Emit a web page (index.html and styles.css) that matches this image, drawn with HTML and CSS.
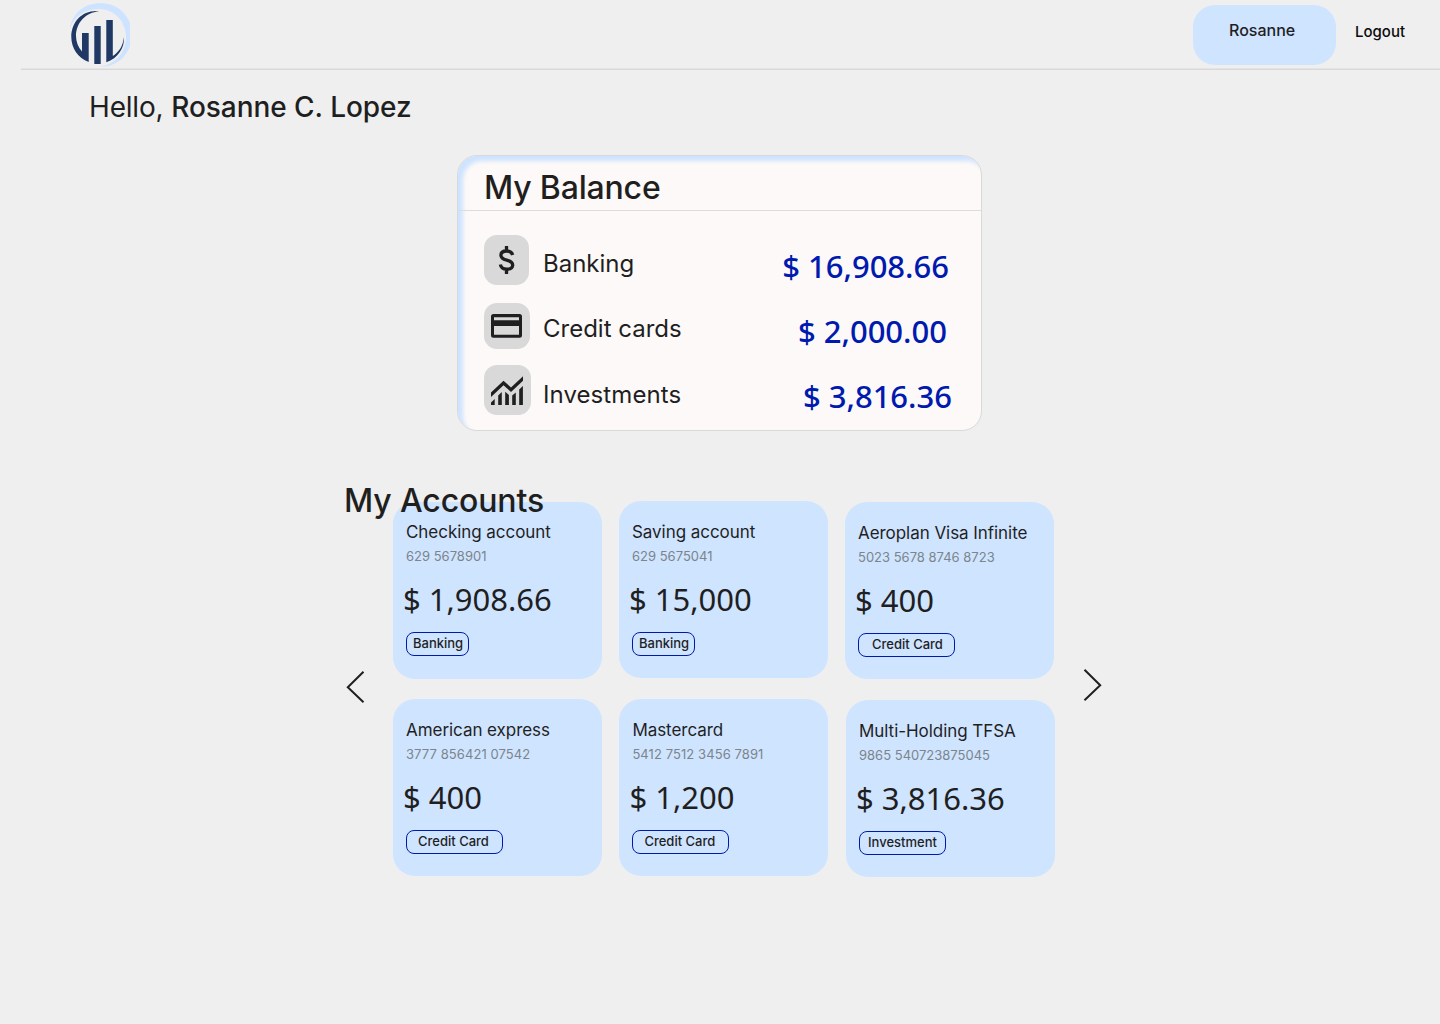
FILE: index.html
```html
<!DOCTYPE html>
<html lang="en">
<head>
<meta charset="utf-8">
<title>My accounts</title>
<link rel="stylesheet" href="styles.css">
</head>
<body>
<header class="topbar">
  <svg class="logo" viewBox="70 0 60 68" width="60" height="68" aria-label="Logo">
    <path fill="#cde3ff" d="M70 28C73 12 85 3.300 100 3.300C113 3.300 124 9 130 23V46C126 58 115 67 99 67C114 65 126 54 126 37C126 21 114 9 99 9C86 9 75 15 70 28Z"/>
    <path fill="#1f3864" d="M99 11.200C83 9.500 71.300 21.500 71.300 37C71.300 48 78 58 88.700 62V33H82V51.500C78 47 76 41.500 76 36C76 22.500 86 12.500 99 11.200ZM94.300 26H100.700V64H94.300ZM106.300 20H112.800V56C119 52 123 46 123.900 37C125 47 118 58.500 106.300 62.300Z"/>
  </svg>
  <nav class="user-nav">
    <a class="user-pill">Rosanne</a>
    <a class="logout">Logout</a>
  </nav>
</header>

<main>
  <h1 class="greeting">Hello, <strong>Rosanne C. Lopez</strong></h1>

  <section class="balance">
    <h2 class="balance-title">My Balance</h2>
    <div class="balance-rows">
      <div class="balance-row">
        <span class="icon icon-bank">
          <svg viewBox="0 0 45 50" width="45" height="50"><path fill="none" stroke="#1f1f1f" stroke-width="3.3" d="M22.500 11V16M22.500 34V39M28.700 20C27.900 17.200 25.600 16 22.700 16C19 16 16.900 17.700 16.900 20.300C16.900 23.200 19 24.200 22.800 25.200C26.800 26.200 28.700 27.300 28.700 30C28.700 32.800 26.300 34.200 22.700 34.200C19.200 34.200 16.900 32.600 16.400 29.500"/></svg>
        </span>
        <span class="label">Banking</span>
        <span class="amount amount-bank">$ 16,908.66</span>
      </div>
      <div class="balance-row">
        <span class="icon icon-card">
          <svg viewBox="0 0 46 46" width="46" height="46"><path fill="#1f1f1f" fill-rule="evenodd" d="M10 11H35.500Q38 11 38 13.500V32.300Q38 34.800 35.500 34.800H9.500Q7 34.800 7 32.300V13.500Q7 11 9.500 11ZM10 14.200V17.200H35V14.200ZM10 23V31.800H35V23Z"/></svg>
        </span>
        <span class="label">Credit cards</span>
        <span class="amount amount-card">$ 2,000.00</span>
      </div>
      <div class="balance-row">
        <span class="icon icon-invest">
          <svg viewBox="0 0 47 50" width="47" height="50"><path fill="#1f1f1f" d="M7 27.500L19.500 15.800L27 22.500L39 11.300V15.800L27 27L19.500 20.300L7 32ZM7 37.500L10.700 34V40H7ZM14.200 30.500L17.800 27V40H14.200ZM21.200 26.700L24.900 30V40H21.200ZM28.200 30.500L31.800 27.500V40H28.200ZM35.200 24.500L38.900 21V40H35.200Z"/></svg>
        </span>
        <span class="label label-invest">Investments</span>
        <span class="amount amount-invest">$ 3,816.36</span>
      </div>
    </div>
  </section>

  <section class="accounts">
    <h2 class="accounts-title">My Accounts</h2>
    <div class="carousel">
      <svg class="arrow arrow-prev" viewBox="0 0 20 34" width="20" height="34"><path d="M18.500 1.700L2.800 17.300L18.500 32.200"/></svg>
      <div class="cards">
        <article class="card card-checking">
          <h3 class="name">Checking account</h3>
          <p class="number">629 5678901</p>
          <p class="sum">$ 1,908.66</p>
          <span class="tag tag-banking">Banking</span>
        </article>
        <article class="card card-saving">
          <h3 class="name">Saving account</h3>
          <p class="number">629 5675041</p>
          <p class="sum">$ 15,000</p>
          <span class="tag tag-banking">Banking</span>
        </article>
        <article class="card card-visa">
          <h3 class="name">Aeroplan Visa Infinite</h3>
          <p class="number">5023 5678 8746 8723</p>
          <p class="sum">$ 400</p>
          <span class="tag tag-credit">Credit Card</span>
        </article>
        <article class="card card-amex">
          <h3 class="name">American express</h3>
          <p class="number">3777 856421 07542</p>
          <p class="sum">$ 400</p>
          <span class="tag tag-credit">Credit Card</span>
        </article>
        <article class="card card-master">
          <h3 class="name">Mastercard</h3>
          <p class="number">5412 7512 3456 7891</p>
          <p class="sum">$ 1,200</p>
          <span class="tag tag-credit">Credit Card</span>
        </article>
        <article class="card card-tfsa">
          <h3 class="name">Multi-Holding TFSA</h3>
          <p class="number">9865 540723875045</p>
          <p class="sum">$ 3,816.36</p>
          <span class="tag tag-invest">Investment</span>
        </article>
      </div>
      <svg class="arrow arrow-next" viewBox="0 0 20 34" width="20" height="34"><path d="M1.500 1.700L17.200 17.300L1.500 32.200"/></svg>
    </div>
  </section>
</main>
</body>
</html>
```

FILE: styles.css
```css
* {
  box-sizing: border-box;
}

body {
  margin: 0;
  min-height: 1024px;
  background: #efefef;
  color: #1f1f1f;
  font-family: Inter, sans-serif;
}

h1, h2, h3, p {
  margin: 0;
  font-weight: 400;
  white-space: nowrap;
}

svg {
  display: block;
}

.topbar {
  display: flex;
  justify-content: space-between;
  align-items: flex-start;
  height: 70px;
  margin-left: 21px;
  padding-left: 49px;
  border-bottom: 1px solid #d9d9d9;
  box-shadow: inset 0 -1px #e4e4e4;
}

.user-nav {
  display: flex;
  padding-top: 5px;
}

.user-pill {
  width: 143px;
  height: 60px;
  padding: 16px 0 0 36px;
  border-radius: 22px;
  background: #cfe4ff;
  font-size: 16px;
  font-weight: 500;
  line-height: 19px;
}

.logout {
  width: 104px;
  padding: 17px 0 0 19px;
  color: #0b0b0b;
  font-size: 15px;
  font-weight: 500;
  line-height: 19px;
}

.greeting {
  margin: 20px 0 0 89px;
  font-size: 28px;
  line-height: 34px;
  letter-spacing: -0.18px;
}

.greeting strong {
  font-weight: 500;
  letter-spacing: -0.04px;
}

.balance {
  width: 525px;
  height: 276px;
  margin: 31px 0 0 457px;
  border: 1px solid #d9d9d9;
  border-radius: 20px;
  background: #fdf9f8;
  box-shadow: inset 5px 5px 4px #cde3ff;
}

.balance-title {
  height: 55px;
  padding: 13px 0 0 26px;
  border-bottom: 1px solid #dadddb;
  font-size: 32px;
  font-weight: 500;
  line-height: 38px;
  letter-spacing: -0.18px;
}

.balance-rows {
  padding: 24px 0 0 26px;
}

.balance-row {
  display: flex;
  align-items: flex-start;
  height: 65px;
}

.icon {
  border-radius: 13px;
  background: #d9d9d9;
}

.icon-bank {
  margin-right: 14px;
}

.icon-card {
  margin: 3px 13px 0 0;
}

.icon-invest {
  margin-right: 12px;
}

.label {
  padding-top: 14px;
  font-size: 24px;
  line-height: 29px;
}

.label-invest {
  padding-top: 15px;
  letter-spacing: 0.08px;
}

.amount {
  margin-left: auto;
  padding-top: 9px;
  color: #001aaf;
  font-family: "Noto Sans", sans-serif;
  font-size: 31px;
  font-weight: 550;
  line-height: 44px;
}

.amount-bank {
  margin-right: 32px;
}

.amount-card {
  margin-right: 34px;
}

.amount-invest {
  margin-right: 29px;
}

.accounts {
  padding: 51px 0 0 344px;
}

.accounts-title {
  position: relative;
  z-index: 1;
  height: 19px;
  font-size: 32px;
  font-weight: 500;
  line-height: 38px;
  letter-spacing: -0.12px;
}

.carousel {
  display: flex;
  align-items: flex-start;
}

.arrow {
  flex: none;
  fill: none;
  stroke: #1f1f1f;
  stroke-width: 2;
}

.arrow-prev {
  margin: 169px 28px 0 1px;
}

.arrow-next {
  margin: 167px 0 0 29px;
}

.cards {
  display: grid;
  grid-template-columns: repeat(3, 209px);
  grid-template-rows: 177px 177px;
  gap: 21px 17px;
}

.card {
  height: 177px;
  padding: 20px 0 0 13px;
  border-radius: 22px;
  background: #cfe4ff;
}

.card-checking {
  margin-top: 1px;
  padding-top: 19px;
}

.card-visa {
  margin-top: 1px;
}

.card-master {
  margin: 0 -0.4px 0 0.4px;
}

.card-tfsa {
  margin: 1.4px -1px 0 1px;
}

.name {
  font-size: 17px;
  line-height: 22px;
  letter-spacing: -0.05px;
}

.number {
  margin-top: 5px;
  color: #7b858b;
  font-size: 13px;
  line-height: 16px;
}

.card-amex .number,
.card-master .number {
  letter-spacing: 0.08px;
}

.sum {
  margin: 13px 0 0 -3px;
  font-family: "Noto Sans", sans-serif;
  font-size: 31px;
  line-height: 44px;
}

.tag {
  display: block;
  height: 24px;
  margin-top: 11px;
  border: 1px solid #001aaf;
  border-radius: 8px;
  font-size: 13px;
  font-weight: 500;
  line-height: 21px;
}

.tag-banking {
  width: 63px;
  padding-left: 6px;
}

.tag-credit {
  width: 97px;
  padding-left: 11px;
}

.card-visa .tag-credit {
  padding-left: 13px;
}

.tag-invest {
  width: 87px;
  padding-left: 8px;
}
```
